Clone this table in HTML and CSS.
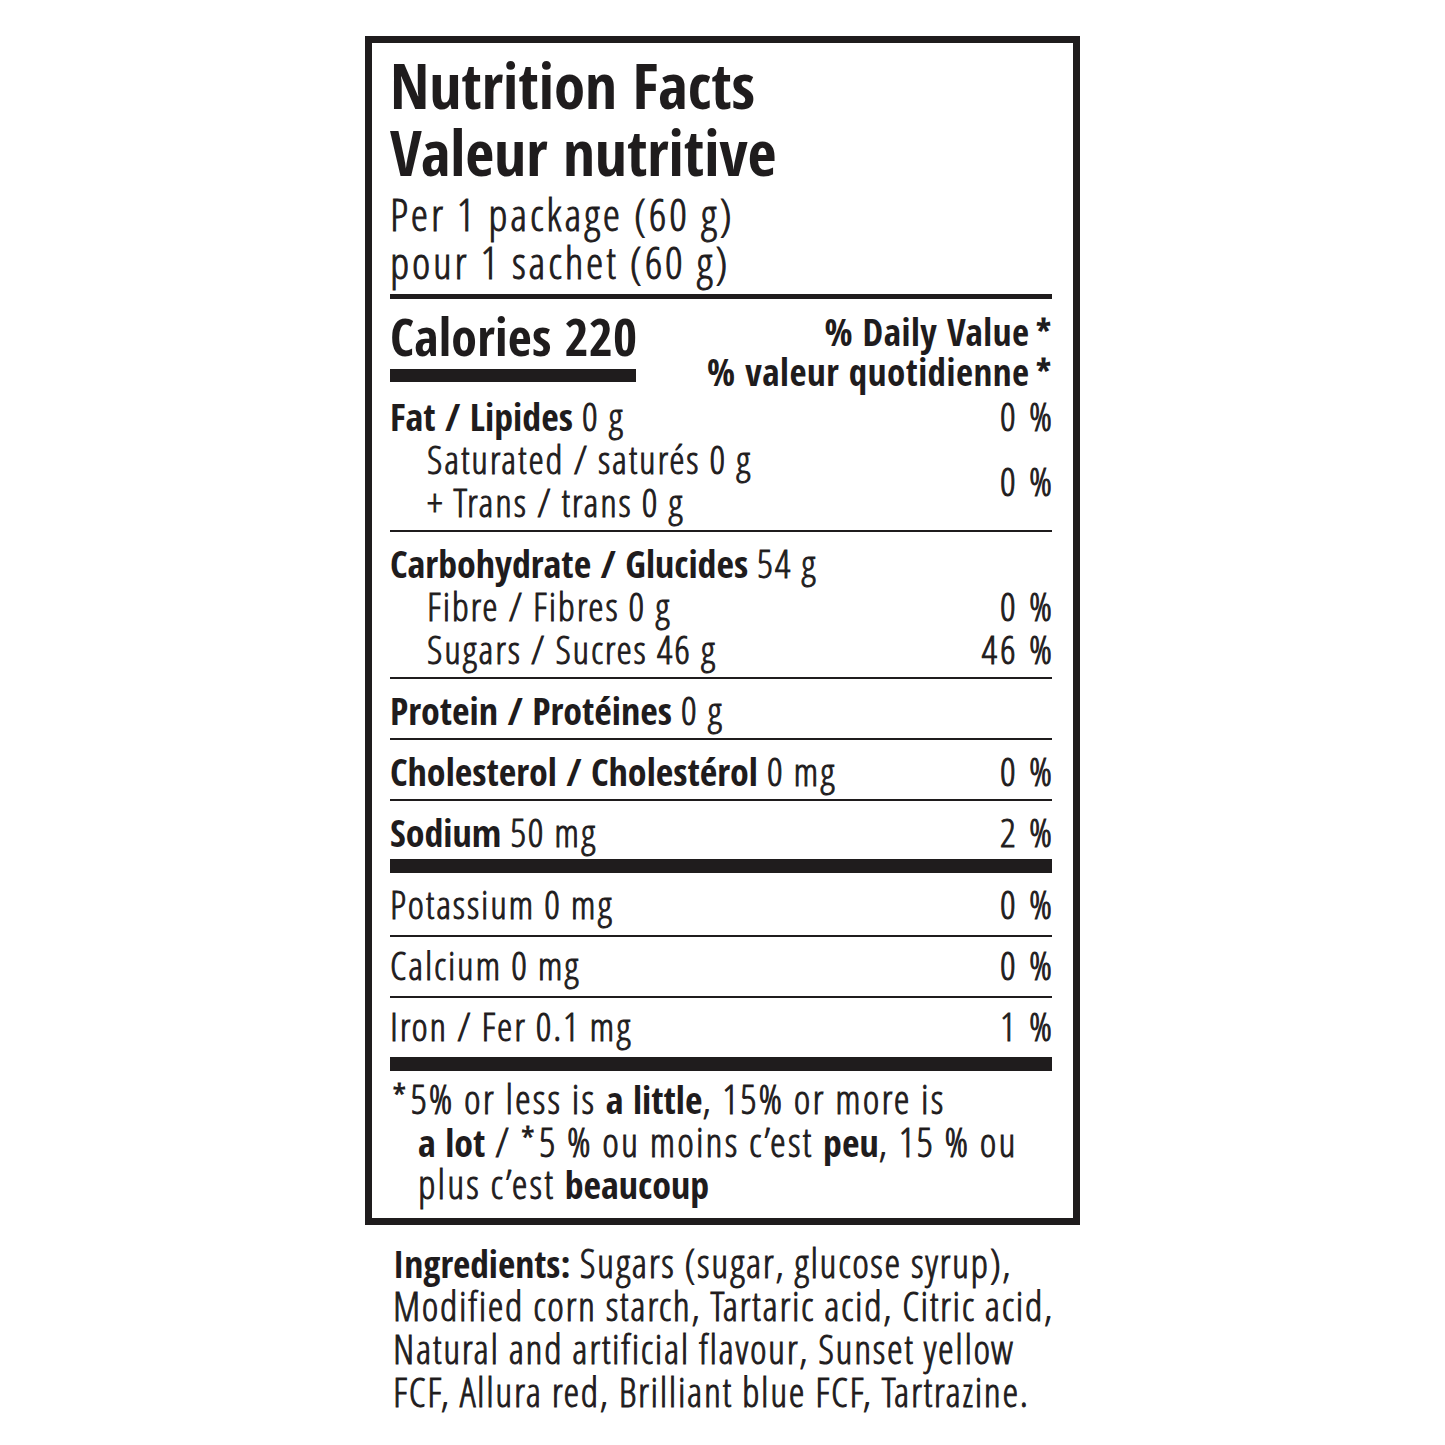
FILE: index.html
```html
<!DOCTYPE html>
<html lang="en">
<head>
<meta charset="utf-8">
<title>Nutrition Facts</title>
<link rel="stylesheet" href="styles.css">
</head>
<body>
<div class="page">
  <section class="label">
    <h1 class="title">Nutrition Facts<br>Valeur nutritive</h1>
    <p class="serving">Per 1 package (60 g)<br>pour 1 sachet (60 g)</p>
    <div class="cal-row">
      <div class="cal">
        <div class="cal-text">Calories 220</div>
        <div class="cal-bar"></div>
      </div>
      <div class="dv">% Daily Value<span class="ast">*</span><br>% valeur quotidienne<span class="ast">*</span></div>
    </div>

    <div class="group first">
      <div class="row"><span><b>Fat / Lipides</b> 0 g</span><span class="pct">0 %</span></div>
      <div class="row pair">
        <div class="sub">
          <div>Saturated / saturés 0 g</div>
          <div>+ Trans / trans 0 g</div>
        </div>
        <span class="pct">0 %</span>
      </div>
    </div>

    <div class="group">
      <div class="row"><span><b>Carbohydrate / Glucides</b> 54 g</span><span class="pct"></span></div>
      <div class="row indent"><span>Fibre / Fibres 0 g</span><span class="pct">0 %</span></div>
      <div class="row indent"><span>Sugars / Sucres 46 g</span><span class="pct">46 %</span></div>
    </div>

    <div class="group">
      <div class="row"><span><b>Protein / Protéines</b> 0 g</span><span class="pct"></span></div>
    </div>

    <div class="group">
      <div class="row"><span><b>Cholesterol / Cholestérol</b> 0 mg</span><span class="pct">0 %</span></div>
    </div>

    <div class="group thick-bottom">
      <div class="row"><span><b>Sodium</b> 50 mg</span><span class="pct">2 %</span></div>
    </div>

    <div class="group after-thick">
      <div class="row"><span>Potassium 0 mg</span><span class="pct">0 %</span></div>
    </div>

    <div class="group lower">
      <div class="row"><span>Calcium 0 mg</span><span class="pct">0 %</span></div>
    </div>

    <div class="group lower thick-bottom">
      <div class="row"><span>Iron / Fer 0.1 mg</span><span class="pct">1 %</span></div>
    </div>

    <p class="foot"><span class="ast-f">*</span>5% or less is <b>a little</b>, 15% or more is<br><b>a lot</b> / <span class="ast-f">*</span>5 % ou moins c’est <b>peu</b>, 15 % ou<br>plus c’est <b>beaucoup</b></p>
  </section>

  <p class="ingredients"><b>Ingredients:</b> Sugars (sugar, glucose syrup),<br>Modified corn starch, Tartaric acid, Citric acid,<br>Natural and artificial flavour, Sunset yellow<br>FCF, Allura red, Brilliant blue FCF, Tartrazine.</p>
</div>
</body>
</html>
```

FILE: styles.css
```css
* { box-sizing: border-box; }
html, body { margin: 0; padding: 0; background: #fff; }
body {
  font-family: "Open Sans Condensed Light", "Open Sans Condensed", "Noto Sans", sans-serif;
  font-weight: 300;
  color: #1f1c1d;
  -webkit-text-stroke: 0.9px #1f1c1d;
}
b, .title, .cal-text, .dv {
  font-family: "Open Sans Condensed", "Noto Sans", sans-serif;
  font-weight: 700;
  letter-spacing: 0;
  -webkit-text-stroke: 0;
}
.page {
  width: 1445px;
  padding: 36px 0 0 365px;
}
.label {
  width: 715px;
  border: 7px solid #1f1c1d;
  padding: 8px 21px 12px 18px;
  white-space: nowrap;
}
.title {
  margin: 0;
  font-size: 63px;
  line-height: 67px;
}
.serving {
  margin: 0;
  padding-top: 5px;
  font-size: 44px;
  line-height: 48px;
  letter-spacing: 2.8px;
  padding-bottom: 8px;
  border-bottom: 5px solid #1f1c1d;
}
.cal-row {
  display: flex;
  justify-content: space-between;
  align-items: flex-start;
  padding-top: 10px;
}
.cal {
  display: flex;
  flex-direction: column;
  width: 246px;
}
.cal-text {
  font-size: 52px;
  line-height: 54px;
  letter-spacing: 0.2px;
}
.cal-bar {
  height: 13px;
  background: #1f1c1d;
  margin-top: 6px;
}
.dv {
  text-align: right;
  font-size: 37px;
  line-height: 40px;
  padding-top: 3px;
  letter-spacing: 0.5px;
}
.ast {
  margin-left: 6px;
  font-size: 44px;
  line-height: 0;
  vertical-align: -6px;
  font-family: "Open Sans Condensed Light", "Open Sans Condensed", sans-serif;
  font-weight: 300;
  -webkit-text-stroke: 1.6px #1f1c1d;
}
.group {
  padding: 9px 0 7px;
  border-bottom: 2px solid #1f1c1d;
}
.group.first { padding-top: 2px; padding-bottom: 7px; }
.group.thick-bottom { border-bottom: 14px solid #1f1c1d; padding-bottom: 6px; }
.group.after-thick { padding: 9px 0 10px; }
.group.lower { padding-top: 6px; padding-bottom: 10px; }
.row {
  display: flex;
  justify-content: space-between;
  align-items: center;
  font-size: 39px;
  line-height: 43px;
  height: 43px;
  letter-spacing: 1.8px;
}
.row b { font-size: 38px; }
.row .pct { letter-spacing: 3px; margin-right: -3px; }
.row.pair { height: 86px; }
.row.indent, .row .sub { padding-left: 37px; }
.foot {
  margin: 0;
  padding: 7px 0 0 28px;
  text-indent: -26px;
  font-size: 40px;
  line-height: 42.5px;
  letter-spacing: 2.1px;
}
.foot b { font-size: 38px; }
.ast-f { margin-right: 2px; }
.ingredients {
  margin: 17px 0 0 28px;
  font-size: 40px;
  line-height: 42.7px;
  letter-spacing: 1.6px;
  white-space: nowrap;
}
.ingredients b { font-size: 37.5px; }
```
